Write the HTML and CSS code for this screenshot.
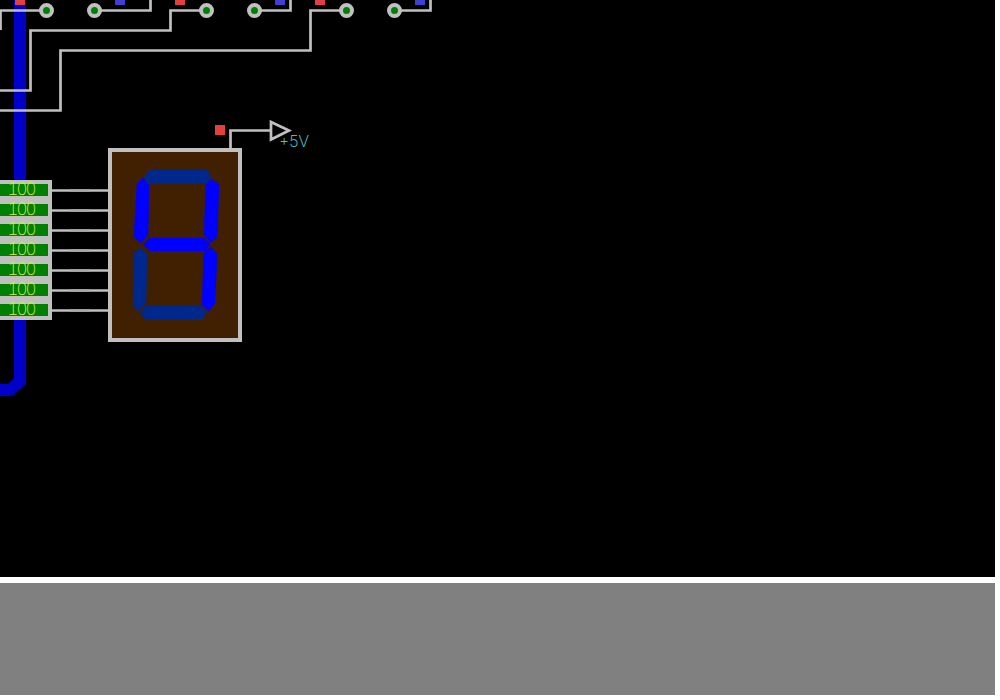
FILE: index.html
```html
<!DOCTYPE html>
<html lang="en">

<head>
    <meta charset="UTF-8">
    <title>Seven segment circuit</title>
    <link rel="stylesheet" href="styles.css">
</head>

<body>
    <div class="window">
        <div class="canvas">
            <svg class="board" width="995" height="577" viewBox="0 0 995 577">
                <!-- bus -->
                <path class="bus" d="M20 0V381L10 390H0" />

                <!-- top wires -->
                <path class="wire" d="M0.500 30V10.500H40" />
                <path class="wire" d="M94 10.500H150.500V0" />
                <path class="wire" d="M206 10.500H170.500V30.500H30.500V90.500H0" />
                <path class="wire" d="M254 10.500H290.500V0" />
                <path class="wire" d="M346 10.500H310.500V50.500H60.500V110.500H0" />
                <path class="wire" d="M394 10.500H430.500V0" />

                <rect class="pin-red" x="15" y="-5" width="10" height="10" />
                <rect class="pin-blue" x="115" y="-5" width="10" height="10" />
                <rect class="pin-red" x="175" y="-5" width="10" height="10" />
                <rect class="pin-blue" x="275" y="-5" width="10" height="10" />
                <rect class="pin-red" x="315" y="-5" width="10" height="10" />
                <rect class="pin-blue" x="415" y="-5" width="10" height="10" />

                <circle class="pad" cx="46.500" cy="10.500" r="5.500" />
                <circle class="pad" cx="94.500" cy="10.500" r="5.500" />
                <circle class="pad" cx="206.500" cy="10.500" r="5.500" />
                <circle class="pad" cx="254.500" cy="10.500" r="5.500" />
                <circle class="pad" cx="346.500" cy="10.500" r="5.500" />
                <circle class="pad" cx="394.500" cy="10.500" r="5.500" />

                <!-- +5V -->
                <rect class="pin-red" x="215" y="125" width="10" height="10" />
                <path class="wire" d="M230.500 150V130.500H270" />
                <path class="wire" d="M271 122L289 130.500L271 139.500Z" />
                <text class="label-power" x="279" y="147">+5V</text>

                <!-- resistor pack -->
                <rect class="pack" x="0" y="180" width="52" height="140" />
                <g class="leads">
                    <path class="wire" d="M52 190.500H108" />
                    <path class="wire" d="M52 210.500H108" />
                    <path class="wire" d="M52 230.500H108" />
                    <path class="wire" d="M52 250.500H108" />
                    <path class="wire" d="M52 270.500H108" />
                    <path class="wire" d="M52 290.500H108" />
                    <path class="wire" d="M52 310.500H108" />
                    <path class="lead-mid" d="M70 190.500H90M70 210.500H90M70 230.500H90M70 250.500H90M70 270.500H90M70 290.500H90M70 310.500H90" />
                </g>
                <g class="resistors">
                    <rect class="res" x="0" y="184" width="48" height="12" />
                    <rect class="res" x="0" y="204" width="48" height="12" />
                    <rect class="res" x="0" y="224" width="48" height="12" />
                    <rect class="res" x="0" y="244" width="48" height="12" />
                    <rect class="res" x="0" y="264" width="48" height="12" />
                    <rect class="res" x="0" y="284" width="48" height="12" />
                    <rect class="res" x="0" y="304" width="48" height="12" />
                    <text class="res-value" x="21" y="195">100</text>
                    <text class="res-value" x="21" y="215">100</text>
                    <text class="res-value" x="21" y="235">100</text>
                    <text class="res-value" x="21" y="255">100</text>
                    <text class="res-value" x="21" y="275">100</text>
                    <text class="res-value" x="21" y="295">100</text>
                    <text class="res-value" x="21" y="315">100</text>
                </g>

                <!-- display -->
                <rect class="display" x="110" y="150" width="130" height="190" />
                <polygon class="seg-off" points="144,177 150,170 207,170 211,177 207,183 148,183" />
                <polygon class="seg-on" points="212,179 219,185 217,237 211,243 204,235 206,184" />
                <polygon class="seg-on" points="143,178 149,185 148,235 141,243 134,237 137,184" />
                <polygon class="seg-on" points="150,238 204,238 210,244.500 205,251 150,251 143,244.500" />
                <polygon class="seg-off" points="140.500,248 147,254 146,303 138,311 133,305 134,253" />
                <polygon class="seg-on" points="211,247 217,254 215,303 209,311 202,305 204,253" />
                <polygon class="seg-off" points="140,312 146,306 200,306 207,312 202,319 145,319" />
            </svg>
        </div>
        <div class="divider"></div>
        <div class="panel"></div>
    </div>
</body>

</html>
```

FILE: styles.css
```css
* {
    margin: 0;
    padding: 0;
    box-sizing: border-box;
}

body {
    background-color: white;
}

.window {
    width: 995px;
    height: 695px;
    display: flex;
    flex-direction: column;
}

.canvas {
    height: 577px;
    background-color: black;
}

.board {
    display: block;
}

.divider {
    height: 6px;
    background-color: white;
}

.panel {
    flex: 1;
    background-color: rgb(128, 128, 128);
}

.bus {
    fill: none;
    stroke: rgb(0, 0, 200);
    stroke-width: 12;
}

.wire {
    fill: none;
    stroke: rgb(192, 192, 192);
    stroke-width: 2.700;
}

.lead-mid {
    fill: none;
    stroke: rgb(168, 168, 168);
    stroke-width: 2.700;
}

.pin-red {
    fill: rgb(224, 64, 64);
}

.pin-blue {
    fill: rgb(64, 64, 208);
}

.pad {
    fill: rgb(0, 128, 0);
    stroke: rgb(192, 192, 192);
    stroke-width: 4;
}

.label-power {
    font-family: Inter, sans-serif;
    font-weight: 200;
    font-size: 16px;
    fill: rgb(90, 225, 225);
}

.pack {
    fill: rgb(192, 192, 192);
}

.res {
    fill: rgb(0, 128, 0);
}

.res-value {
    font-family: Inter, sans-serif;
    font-weight: 200;
    font-size: 17px;
    font-variant-numeric: tabular-nums;
    letter-spacing: -2px;
    text-anchor: middle;
    fill: rgb(205, 245, 70);
}

.display {
    fill: rgb(64, 32, 0);
    stroke: rgb(192, 192, 192);
    stroke-width: 4;
}

.seg-on,
.seg-off {
    stroke-width: 0.500;
    stroke-linejoin: round;
}

.seg-on {
    fill: rgb(0, 0, 255);
    stroke: rgb(0, 0, 255);
}

.seg-off {
    fill: rgb(0, 40, 140);
    stroke: rgb(0, 40, 140);
}
```
